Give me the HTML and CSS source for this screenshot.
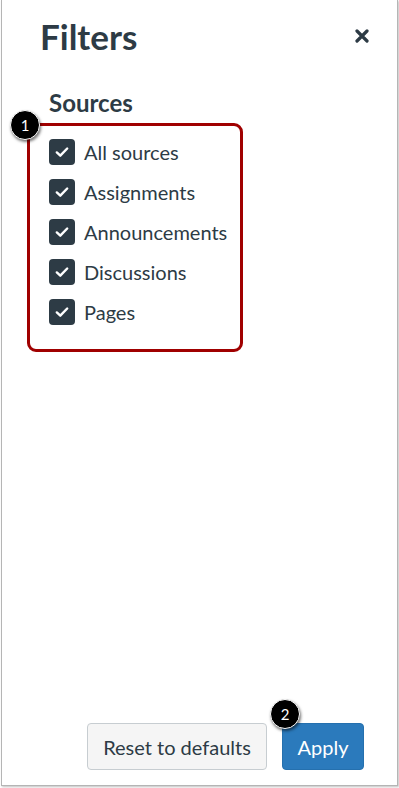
FILE: index.html
```html
<!DOCTYPE html>
<html>
<head>
<meta charset="utf-8">
<link rel="stylesheet" href="styles.css">
</head>
<body>
<div class="panel">
  <header class="header">
    <h1 class="title">Filters</h1>
    <button class="close" aria-label="Close">
      <svg width="14" height="14" viewBox="0 0 14 14"><path d="M2 2 L12 12 M12 2 L2 12" stroke="#2D3B45" stroke-width="3.2" stroke-linecap="round"/></svg>
    </button>
  </header>
  <section class="content">
    <h2 class="section-title">Sources</h2>
    <div class="highlight">
      <span class="badge badge-one">1</span>
      <ul class="options">
        <li class="option"><span class="check"><svg width="16" height="16" viewBox="0 0 16 16"><path d="M2.8 8.4 L6.3 11.7 L13.2 4.5" fill="none" stroke="#fff" stroke-width="2.4" stroke-linecap="round" stroke-linejoin="round"/></svg></span>All sources</li>
        <li class="option"><span class="check"><svg width="16" height="16" viewBox="0 0 16 16"><path d="M2.8 8.4 L6.3 11.7 L13.2 4.5" fill="none" stroke="#fff" stroke-width="2.4" stroke-linecap="round" stroke-linejoin="round"/></svg></span>Assignments</li>
        <li class="option"><span class="check"><svg width="16" height="16" viewBox="0 0 16 16"><path d="M2.8 8.4 L6.3 11.7 L13.2 4.5" fill="none" stroke="#fff" stroke-width="2.4" stroke-linecap="round" stroke-linejoin="round"/></svg></span>Announcements</li>
        <li class="option"><span class="check"><svg width="16" height="16" viewBox="0 0 16 16"><path d="M2.8 8.4 L6.3 11.7 L13.2 4.5" fill="none" stroke="#fff" stroke-width="2.4" stroke-linecap="round" stroke-linejoin="round"/></svg></span>Discussions</li>
        <li class="option"><span class="check"><svg width="16" height="16" viewBox="0 0 16 16"><path d="M2.8 8.4 L6.3 11.7 L13.2 4.5" fill="none" stroke="#fff" stroke-width="2.4" stroke-linecap="round" stroke-linejoin="round"/></svg></span>Pages</li>
      </ul>
    </div>
  </section>
  <footer class="footer">
    <button class="btn btn-secondary">Reset to defaults</button>
    <button class="btn btn-primary"><span class="badge badge-two">2</span>Apply</button>
  </footer>
</div>
</body>
</html>
```
FILE: styles.css
```css
* { box-sizing: border-box; }
html, body { margin: 0; padding: 0; background: #fff; }
body {
  font-family: Lato, "Noto Sans", sans-serif;
  color: #2D3B45;
  width: 399px;
  height: 788px;
  overflow: hidden;
}
.panel {
  margin-left: 1px;
  width: 397px;
  height: 786px;
  border: 1px solid #b5b5b5;
  border-top: none;
  box-shadow: 1px 1px 2px rgba(0,0,0,0.25);
  display: flex;
  flex-direction: column;
}
.header {
  display: flex;
  justify-content: space-between;
  align-items: center;
  padding: 15px 28px 0 38px;
}
.title {
  margin: 0;
  font-size: 35px;
  line-height: 42px;
  font-weight: 700;
}
.close {
  border: 0;
  background: none;
  padding: 0;
  width: 14px;
  height: 14px;
  display: flex;
}
.content {
  padding: 31px 0 0 25px;
}
.section-title {
  margin: 0 0 5px 22px;
  font-size: 24px;
  line-height: 30px;
  font-weight: 700;
}
.highlight {
  position: relative;
  width: 216px;
  border: 3px solid #a00000;
  border-radius: 9px;
  padding: 13px 0 24px 19px;
}
.options {
  list-style: none;
  margin: 0;
  padding: 0;
  display: flex;
  flex-direction: column;
  gap: 14px;
}
.option {
  display: flex;
  align-items: center;
  gap: 9px;
  font-size: 20px;
  line-height: 26px;
  height: 26px;
}
.check {
  width: 26px;
  height: 26px;
  border-radius: 4px;
  background: #2D3B45;
  display: flex;
  align-items: center;
  justify-content: center;
  flex: none;
}
.check svg { display: block; }
.footer {
  margin-top: auto;
  display: flex;
  justify-content: flex-end;
  gap: 15px;
  padding: 0 33px 15px 0;
}
.btn {
  position: relative;
  height: 47px;
  border-radius: 4px;
  font-family: Lato, "Noto Sans", sans-serif;
  font-size: 20px;
  padding: 0;
  white-space: nowrap;
  border: 1px solid transparent;
}
.btn-secondary {
  background: #F5F5F5;
  border-color: #C7CDD1;
  color: #2D3B45;
  width: 180px;
}
.btn-primary {
  background: #2B7ABC;
  border-color: #2570AE;
  color: #fff;
  width: 82px;
}
.badge {
  position: absolute;
  width: 30px;
  height: 30px;
  border-radius: 50%;
  background: #000;
  color: #fff;
  border: 1px solid #fff;
  box-shadow: 1px 2px 3px rgba(0,0,0,0.55);
  font-family: Lato, "Noto Sans", sans-serif;
  font-size: 15px;
  font-weight: 400;
  line-height: 28px;
  text-align: center;
}
.badge-one { left: -20px; top: -16px; }
.badge-two { left: -13px; top: -25px; }
```
